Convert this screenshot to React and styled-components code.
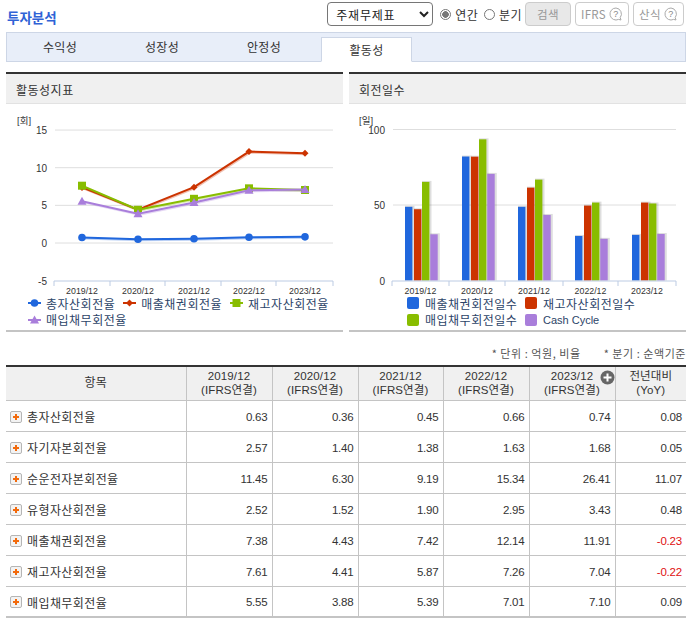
import React from "react";
import styled, { createGlobalStyle } from "styled-components";

const KR = `"Noto Sans CJK KR", "Liberation Sans", sans-serif`;
const LATIN_KR = `"Liberation Sans", "Noto Sans CJK KR", sans-serif`;

const GlobalStyle = createGlobalStyle`
  html, body {
    margin: 0;
    padding: 0;
    background: #fff;
  }
  body {
    font-family: ${KR};
    font-size: 12px;
    color: #333;
  }
`;

const Page = styled.div`
  width: 680px;
  height: 620px;
  padding: 0 5px 0 6px;
  overflow: hidden;
`;

const TopBar = styled.div`
  height: 32px;
  display: flex;
  align-items: center;
  justify-content: space-between;
`;

const Title = styled.h2`
  margin: 1px 0 0 1px;
  font-size: 13.5px;
  font-weight: 700;
  color: #2f62d6;
`;

const Controls = styled.div`
  display: flex;
  align-items: center;
  margin-bottom: 4px;
  margin-right: 2px;
`;

const Select = styled.select`
  width: 106px;
  height: 24px;
  padding: 0 0 0 4px;
  margin-right: 7px;
  font-family: ${KR};
  font-size: 12px;
  letter-spacing: 0.8px;
  color: #222;
  background: #fff;
  border: 1px solid #767676;
  border-radius: 4px;
`;

const RadioLabel = styled.label`
  display: flex;
  align-items: center;
  gap: 4px;
  margin-right: ${(props) => props.$gap}px;
  font-size: 12px;
  letter-spacing: 0.4px;
  color: #333;
`;

const RadioDot = styled.span`
  width: 9px;
  height: 9px;
  border: 1px solid #777;
  border-radius: 50%;
  background: ${(props) =>
    props.$checked ? "radial-gradient(circle, #777 0 3px, #fff 3.6px)" : "#fff"};
`;

const Button = styled.button`
  height: 24px;
  width: ${(props) => props.$width}px;
  margin-left: ${(props) => props.$left}px;
  padding: 0;
  display: flex;
  align-items: center;
  justify-content: center;
  gap: 3px;
  font-family: ${KR};
  font-size: 11.5px;
  letter-spacing: 0.3px;
  color: #999;
  background: ${(props) => (props.$filled ? "#e8e8e8" : "#fff")};
  border: 1px solid #ccc;
  border-radius: 4px;
`;

const TabBar = styled.div`
  height: 30px;
  box-sizing: border-box;
  display: flex;
  align-items: flex-end;
  padding-left: 2px;
  background: #e8eef9;
  border: 1px solid #cdd6e6;
`;

const Tab = styled.div`
  width: ${(props) => (props.$active ? 91 : 102)}px;
  height: ${(props) => (props.$active ? 25 : 29)}px;
  box-sizing: border-box;
  margin-left: ${(props) => (props.$active ? 6 : 0)}px;
  margin-bottom: ${(props) => (props.$active ? -1 : 0)}px;
  padding-bottom: ${(props) => (props.$active ? 1 : 0)}px;
  display: flex;
  align-items: center;
  justify-content: center;
  font-size: 12px;
  letter-spacing: 0.3px;
  color: #333;
  background: ${(props) => (props.$active ? "#fff" : "transparent")};
  border: ${(props) => (props.$active ? "1px solid #cdd6e6" : "none")};
  border-bottom: ${(props) => (props.$active ? "1px solid #fff" : "none")};
`;

const Panels = styled.div`
  display: grid;
  grid-template-columns: 337px 337px;
  gap: 6px;
  margin-top: 10px;
`;

const Panel = styled.section`
  height: 260px;
  box-sizing: border-box;
  border-top: 2px solid #333;
  border-bottom: 2px solid #c4c4c4;
`;

const PanelHeader = styled.div`
  height: 30px;
  display: flex;
  align-items: center;
  padding: 1px 0 0 10px;
  font-size: 12px;
  letter-spacing: 0.5px;
  color: #333;
  background: #f0f0f0;
  border-bottom: 1px solid #e2e2e2;
  box-sizing: border-box;
`;

const ChartSvg = styled.svg`
  display: block;
  width: 337px;
  height: 191px;
  text {
    font-family: ${LATIN_KR};
    fill: #333;
  }
`;

const LineLegend = styled.div`
  display: flex;
  flex-wrap: wrap;
  column-gap: 8px;
  padding-left: 22px;
`;

const LegendItem = styled.div`
  display: flex;
  align-items: center;
  gap: ${(props) => props.$gap || 5}px;
  height: 16.5px;
  font-size: 12px;
  letter-spacing: 0.5px;
  color: #2c4468;
  white-space: nowrap;
`;

const LatinLabel = styled.span`
  font-family: "Liberation Sans", sans-serif;
  font-size: 11px;
  letter-spacing: 0;
`;

const BarLegend = styled.div`
  display: grid;
  grid-template-columns: 118px auto;
  padding-left: 58px;
`;

const Swatch = styled.span`
  width: 12px;
  height: 12px;
  border-radius: 2px;
  background: ${(props) => props.$color};
`;

const NoteRow = styled.div`
  height: 33px;
  display: flex;
  justify-content: flex-end;
  align-items: center;
  gap: 23px;
  padding-top: 9px;
  box-sizing: border-box;
  font-size: 11px;
  letter-spacing: 0.55px;
  color: #555;
`;

const Table = styled.table`
  width: 680px;
  table-layout: fixed;
  border-collapse: collapse;
  border-top: 2px solid #333;
  border-bottom: 2px solid #c4c4c4;
`;

const Th = styled.th`
  position: relative;
  height: 34px;
  box-sizing: border-box;
  padding: 1px 0 0;
  font-family: ${LATIN_KR};
  font-size: 11.5px;
  font-weight: 400;
  line-height: 13.5px;
  letter-spacing: 0.1px;
  color: #333;
  background: #f0f0f0;
  border-left: 1px solid #c4c4c4;
  border-bottom: 1px solid #c4c4c4;
  &:first-child {
    border-left: none;
    font-size: 12px;
  }
`;

const PlusBadge = styled.svg`
  position: absolute;
  top: 3px;
  right: 0;
  width: 15px;
  height: 15px;
`;

const Td = styled.td`
  height: 31px;
  padding: 2px 4px 0 0;
  box-sizing: border-box;
  text-align: right;
  font-family: "Liberation Sans", sans-serif;
  font-size: 11.5px;
  letter-spacing: -0.2px;
  color: ${(props) => (props.$minus ? "#e01010" : "#333")};
  border-left: 1px solid #c4c4c4;
  border-bottom: 1px solid #c4c4c4;
`;

const NameCell = styled.td`
  height: 31px;
  padding: 2px 0 0 4px;
  box-sizing: border-box;
  border-bottom: 1px solid #c4c4c4;
  font-size: 12px;
  letter-spacing: 0.4px;
  color: #333;
`;

const NameWrap = styled.div`
  display: flex;
  align-items: center;
  gap: 5px;
`;

const COLORS = {
  blue: "#2067dd",
  red: "#cc3300",
  green: "#88bd00",
  purple: "#a97edb",
};

const LINE_X = [76, 132, 188, 243, 299];
const LINE_TICKS = [48, 104, 159, 215, 270, 327];
const BAR_TICKS = [43, 100, 156, 214, 269, 327];
const YEARS = ["2019/12", "2020/12", "2021/12", "2022/12", "2023/12"];

const LINE_SERIES = [
  { name: "총자산회전율", color: COLORS.blue, marker: "circle", values: [0.74, 0.5, 0.57, 0.76, 0.82] },
  { name: "매출채권회전율", color: COLORS.red, marker: "diamond", values: [7.38, 4.43, 7.42, 12.14, 11.91] },
  { name: "재고자산회전율", color: COLORS.green, marker: "square", values: [7.61, 4.41, 5.87, 7.26, 7.04] },
  { name: "매입채무회전율", color: COLORS.purple, marker: "triangle", values: [5.55, 3.88, 5.39, 7.01, 7.1] },
];

const BAR_SERIES = [
  { name: "매출채권회전일수", color: COLORS.blue },
  { name: "재고자산회전일수", color: COLORS.red },
  { name: "매입채무회전일수", color: COLORS.green },
  { name: "Cash Cycle", color: COLORS.purple, latin: true },
];

const BAR_VALUES = [
  [48.8, 47.2, 65.3, 30.6],
  [82.1, 82, 93.5, 70.6],
  [48.8, 61.5, 66.8, 43.4],
  [29.5, 49.6, 51.6, 27.6],
  [30.2, 51.6, 51, 30.8],
];
const BAR_START = [56, 113, 169, 226, 283];
const BAR_OFFSET = [0, 9, 17, 25.3];

const ROWS = [
  { name: "총자산회전율", cells: ["0.63", "0.36", "0.45", "0.66", "0.74", "0.08"] },
  { name: "자기자본회전율", cells: ["2.57", "1.40", "1.38", "1.63", "1.68", "0.05"] },
  { name: "순운전자본회전율", cells: ["11.45", "6.30", "9.19", "15.34", "26.41", "11.07"] },
  { name: "유형자산회전율", cells: ["2.52", "1.52", "1.90", "2.95", "3.43", "0.48"] },
  { name: "매출채권회전율", cells: ["7.38", "4.43", "7.42", "12.14", "11.91", "-0.23"] },
  { name: "재고자산회전율", cells: ["7.61", "4.41", "5.87", "7.26", "7.04", "-0.22"] },
  { name: "매입채무회전율", cells: ["5.55", "3.88", "5.39", "7.01", "7.10", "0.09"] },
];

const COLUMNS = [180, 86, 86, 85, 86, 86, 71];

function Marker({ type, x, y, color }) {
  if (type === "circle") return <circle cx={x} cy={y} r={3.8} fill={color} />;
  if (type === "diamond")
    return <polygon points={`${x},${y - 3.5} ${x + 3.5},${y} ${x},${y + 3.5} ${x - 3.5},${y}`} fill={color} />;
  if (type === "square") return <rect x={x - 4} y={y - 4} width={8} height={8} fill={color} />;
  return <polygon points={`${x},${y - 4.5} ${x + 4.5},${y + 3.5} ${x - 4.5},${y + 3.5}`} fill={color} />;
}

function LineKey({ type, color }) {
  return (
    <svg width="13" height="12" viewBox="0 0 13 12">
      <line x1="0" y1="6" x2="13" y2="6" stroke={color} strokeWidth="2" />
      <Marker type={type} x={6.5} y={6} color={color} />
    </svg>
  );
}

function LineChart() {
  const zero = 139;
  const unit = 7.53;
  const toY = (v) => zero - v * unit;
  return (
    <ChartSvg viewBox="0 0 337 191">
      <text x="11" y="20" fontSize="9.5">[회]</text>
      {[15, 10, 5, 0].map((v) => (
        <line key={v} x1="49" x2="327" y1={toY(v)} y2={toY(v)} stroke="#dedede" />
      ))}
      {[15, 10, 5, 0, -5].map((v) => (
        <text key={v} x="41" y={toY(v) + 4} fontSize="10" textAnchor="end">{v}</text>
      ))}
      <line x1="48" x2="327" y1="177" y2="177" stroke="#bccbe3" />
      {LINE_TICKS.map((x) => (
        <line key={x} x1={x} x2={x} y1="177" y2="182" stroke="#bccbe3" />
      ))}
      {YEARS.map((year, i) => (
        <text key={year} x={LINE_X[i]} y="190" fontSize="8.8" textAnchor="middle">{year}</text>
      ))}
      {LINE_SERIES.map((s) => {
        const points = s.values.map((v, i) => `${LINE_X[i]},${toY(v)}`).join(" ");
        return (
          <g key={s.name}>
            <polyline points={points} transform="translate(1 1)" fill="none" stroke={s.color} strokeOpacity="0.3" strokeWidth="2" />
            <polyline points={points} fill="none" stroke={s.color} strokeWidth="2" />
            {s.values.map((v, i) => (
              <Marker key={i} type={s.marker} x={LINE_X[i]} y={toY(v)} color={s.color} />
            ))}
          </g>
        );
      })}
    </ChartSvg>
  );
}

function BarChart() {
  const zero = 176.5;
  const unit = 1.51;
  return (
    <ChartSvg viewBox="0 0 337 191">
      <text x="10" y="20" fontSize="9.5">[일]</text>
      {[100, 50].map((v) => (
        <line key={v} x1="44" x2="327" y1={zero - v * unit} y2={zero - v * unit} stroke="#dedede" />
      ))}
      {[100, 50, 0].map((v) => (
        <text key={v} x="36" y={zero - v * unit + 4} fontSize="10" textAnchor="end">{v}</text>
      ))}
      {BAR_VALUES.map((group, g) =>
        group.map((v, i) => {
          const h = v * unit;
          const x = BAR_START[g] + BAR_OFFSET[i];
          return (
            <g key={`${g}-${i}`}>
              <rect x={x} y={zero - h - 1} width={9.5} height={h + 1} fill="#000" fillOpacity="0.13" />
              <rect x={x} y={zero - h} width={7.4} height={h} fill={BAR_SERIES[i].color} />
            </g>
          );
        })
      )}
      <line x1="43" x2="327" y1="177" y2="177" stroke="#bccbe3" />
      {BAR_TICKS.map((x) => (
        <line key={x} x1={x} x2={x} y1="177" y2="182" stroke="#bccbe3" />
      ))}
      {YEARS.map((year, i) => (
        <text key={year} x={(BAR_TICKS[i] + BAR_TICKS[i + 1]) / 2} y="190" fontSize="8.8" textAnchor="middle">{year}</text>
      ))}
    </ChartSvg>
  );
}

function HelpIcon() {
  return (
    <svg width="14" height="14" viewBox="0 0 14 14">
      <path d="M7 1a6 6 0 1 0 2.6 11.4L12 13l-.8-2.4A6 6 0 0 0 7 1z" fill="#fff" stroke="#aaa" />
      <text x="7" y="10" fontSize="9" textAnchor="middle" fill="#888" fontFamily="Liberation Sans">?</text>
    </svg>
  );
}

function ExpandIcon() {
  return (
    <svg width="12" height="12" viewBox="0 0 12 12">
      <rect x="0.5" y="0.5" width="11" height="11" rx="1.5" fill="#f3f3f3" stroke="#b5b5b5" />
      <path d="M6 3v6M3 6h6" stroke="#f26a0c" strokeWidth="2" />
    </svg>
  );
}

function App() {
  return (
    <Page>
      <GlobalStyle />
      <TopBar>
        <Title>투자분석</Title>
        <Controls>
          <Select defaultValue="주재무제표">
            <option>주재무제표</option>
          </Select>
          <RadioLabel $gap={6}><RadioDot $checked />연간</RadioLabel>
          <RadioLabel $gap={3}><RadioDot />분기</RadioLabel>
          <Button $filled $width={46} $left={0}>검색</Button>
          <Button $width={54} $left={4}>IFRS<HelpIcon /></Button>
          <Button $width={51} $left={4}>산식<HelpIcon /></Button>
        </Controls>
      </TopBar>

      <TabBar>
        <Tab>수익성</Tab>
        <Tab>성장성</Tab>
        <Tab>안정성</Tab>
        <Tab $active>활동성</Tab>
      </TabBar>

      <Panels>
        <Panel>
          <PanelHeader>활동성지표</PanelHeader>
          <LineChart />
          <LineLegend>
            {LINE_SERIES.map((s) => (
              <LegendItem key={s.name}>
                <LineKey type={s.marker} color={s.color} />
                {s.name}
              </LegendItem>
            ))}
          </LineLegend>
        </Panel>
        <Panel>
          <PanelHeader>회전일수</PanelHeader>
          <BarChart />
          <BarLegend>
            {BAR_SERIES.map((s) => (
              <LegendItem key={s.name} $gap={6}>
                <Swatch $color={s.color} />
                {s.latin ? <LatinLabel>{s.name}</LatinLabel> : s.name}
              </LegendItem>
            ))}
          </BarLegend>
        </Panel>
      </Panels>

      <NoteRow>
        <span>* 단위 : 억원, 비율</span>
        <span>* 분기 : 순액기준</span>
      </NoteRow>

      <Table>
        <colgroup>
          {COLUMNS.map((w, i) => (
            <col key={i} width={w} />
          ))}
        </colgroup>
        <thead>
          <tr>
            <Th>항목</Th>
            {YEARS.map((year, i) => (
              <Th key={year}>
                {year}
                <br />
                (IFRS연결)
                {i === 4 && (
                  <PlusBadge viewBox="0 0 15 15">
                    <circle cx="7.5" cy="7.5" r="7" fill="#666" />
                    <path d="M7.5 3.5v8M3.5 7.5h8" stroke="#fff" strokeWidth="2" />
                  </PlusBadge>
                )}
              </Th>
            ))}
            <Th>
              전년대비
              <br />
              (YoY)
            </Th>
          </tr>
        </thead>
        <tbody>
          {ROWS.map((row) => (
            <tr key={row.name}>
              <NameCell>
                <NameWrap>
                  <ExpandIcon />
                  {row.name}
                </NameWrap>
              </NameCell>
              {row.cells.map((cell, i) => (
                <Td key={i} $minus={cell.startsWith("-")}>{cell}</Td>
              ))}
            </tr>
          ))}
        </tbody>
      </Table>
    </Page>
  );
}

export default App;
